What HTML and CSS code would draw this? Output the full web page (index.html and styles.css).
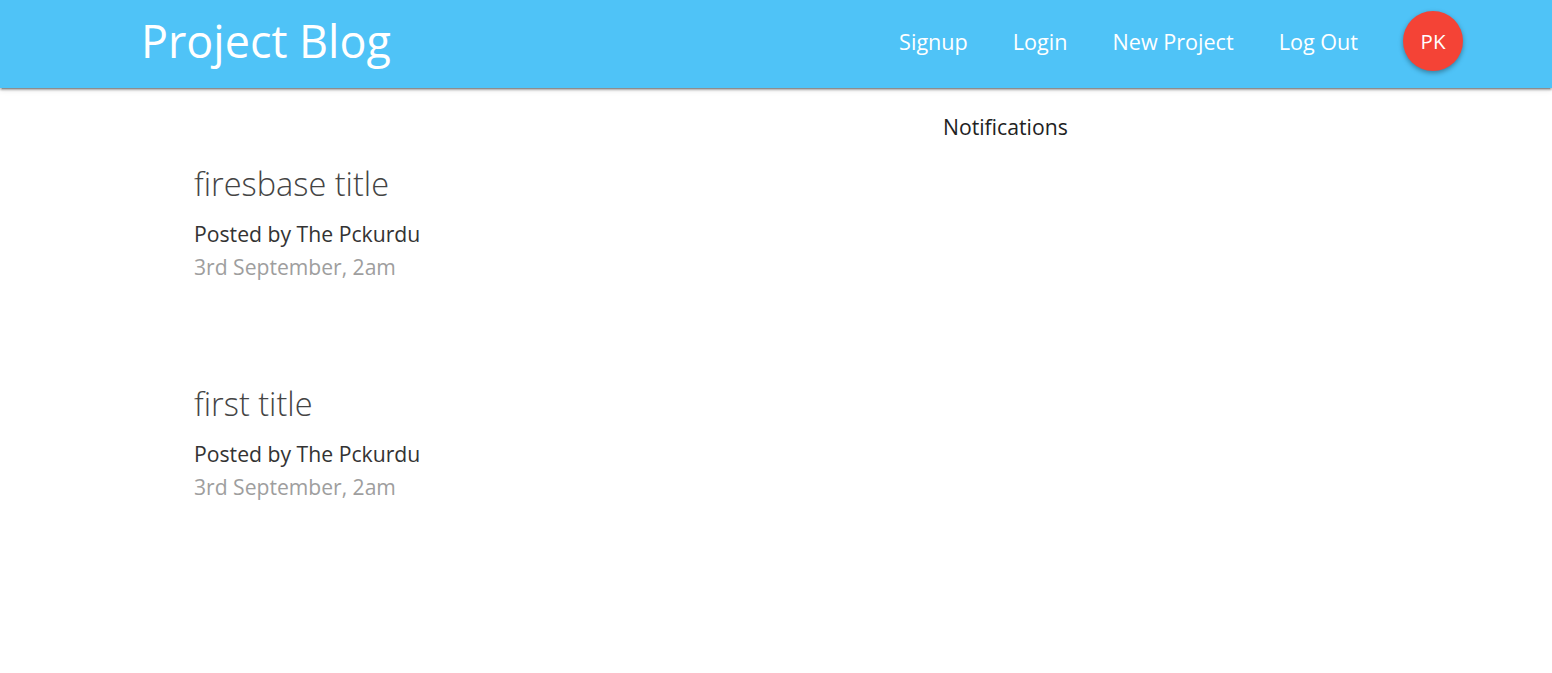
FILE: index.html
```html
<!DOCTYPE html>
<html lang="en">
<head>
<meta charset="utf-8">
<title>Project Blog</title>
<link rel="stylesheet" href="styles.css">
</head>
<body>
<nav class="navbar">
  <div class="nav-inner">
    <a class="brand" href="#">Project Blog</a>
    <ul class="nav-links">
      <li><a href="#">Signup</a></li>
      <li><a href="#">Login</a></li>
      <li><a href="#">New Project</a></li>
      <li><a href="#">Log Out</a></li>
      <li><a class="avatar" href="#">PK</a></li>
    </ul>
  </div>
</nav>
<main class="dashboard">
  <section class="projects">
    <article class="project">
      <h2 class="project-title">firesbase title</h2>
      <p class="project-author">Posted by The Pckurdu</p>
      <p class="project-date">3rd September, 2am</p>
    </article>
    <article class="project">
      <h2 class="project-title">first title</h2>
      <p class="project-author">Posted by The Pckurdu</p>
      <p class="project-date">3rd September, 2am</p>
    </article>
  </section>
  <aside class="notifications">Notifications</aside>
</main>
</body>
</html>
```
FILE: styles.css
```css
* { box-sizing: border-box; }
body { margin: 0; background: #fff; color: #333; font-family: "Open Sans", "Noto Sans", sans-serif; }
a { color: inherit; text-decoration: none; }
.navbar { height: 88px; background: #4fc3f7; box-shadow: 0 2px 2px 0 rgba(0,0,0,.28), 0 3px 1px -2px rgba(0,0,0,.2), 0 2px 6px 0 rgba(0,0,0,.1); color: #fff; }
.nav-inner { height: 100%; padding: 0 89px 6px 141px; display: flex; align-items: center; justify-content: space-between; }
.brand { font-size: 44.9px; line-height: 84px; }
.nav-links { display: flex; align-items: center; gap: 45px; list-style: none; margin: 0; padding: 0; font-size: 21.6px; }
.avatar { width: 60px; height: 60px; border-radius: 50%; background: #f44336; display: flex; align-items: center; justify-content: center; font-size: 20.5px; box-shadow: 0 2px 5px rgba(0,0,0,.35); }
.dashboard { display: flex; padding: 0 0 0 194px; }
.projects { width: 749px; padding-top: 74px; }
.project { height: 220px; }
.project-title { margin: 0 0 11px; font-size: 32.5px; font-weight: 300; line-height: 44px; color: #444; }
.project-author { margin: 0; font-size: 21.2px; line-height: 33px; }
.project-date { margin: 0; font-size: 21.1px; line-height: 33px; color: #9e9e9e; }
.notifications { padding-top: 24px; font-size: 21.2px; line-height: 30px; color: #222; }
```
